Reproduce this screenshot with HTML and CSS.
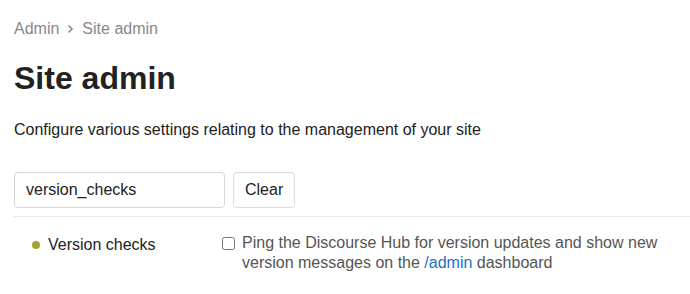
FILE: index.html
```html
<!DOCTYPE html>
<html lang="en">
<head>
    <meta charset="UTF-8">
    <title>Site admin</title>
    <link rel="stylesheet" href="styles.css">
</head>
<body>
<div class="page">
    <div class="crumbs">
        <span>Admin</span>
        <svg class="chev" width="7" height="10" viewBox="0 0 7 10">
            <path d="M1.5 1.5 L5 5 L1.5 8.5" fill="none" stroke="#888" stroke-width="1.6"/>
        </svg>
        <span>Site admin</span>
    </div>
    <h1 class="title">Site admin</h1>
    <p class="desc">Configure various settings relating to the management of your site</p>

    <div class="filter">
        <input class="search" type="text" value="version_checks">
        <button class="btn">Clear</button>
    </div>

    <div class="settings">
        <div class="setting">
            <div class="setting-label">
                <span class="dot"></span>
                <span>Version checks</span>
            </div>
            <label class="setting-value">
                <input type="checkbox" class="check">
                <span>Ping the Discourse Hub for version updates and show new version messages on the <a href="#">/admin</a> dashboard</span>
            </label>
        </div>
    </div>
</div>
</body>
</html>
```

FILE: styles.css
```css
html,body{
    margin:0;
    padding:0;
    background:#fff;
}
body{
    font-family:"Liberation Sans", Arial, sans-serif;
    font-size:16px;
    color:#222;
}
.page{
    padding:17px 0 0 14px;
}
.crumbs{
    display:flex;
    align-items:center;
    line-height:24px;
    color:#888;
}
.chev{
    margin:0 8px 0 8px;
}
.title{
    margin:17px 0 0;
    font-size:32px;
    line-height:40px;
    font-weight:bold;
    color:#222;
}
.desc{
    margin:20px 0 0;
    line-height:24px;
}
.filter{
    display:flex;
    gap:8px;
    margin-top:30px;
    padding-bottom:8px;
    border-bottom:1px solid #e9e9e9;
}
.search{
    box-sizing:border-box;
    width:211px;
    height:36px;
    margin:0;
    padding:0 11px;
    border:1px solid #d6d6d6;
    border-radius:4px;
    font-family:inherit;
    font-size:16px;
    color:#222;
    outline:none;
}
.btn{
    box-sizing:border-box;
    height:36px;
    margin:0;
    padding:0 11px;
    background:#fff;
    border:1px solid #dcdcdc;
    border-radius:4px;
    font-family:inherit;
    font-size:16px;
    color:#222;
}
.setting{
    display:grid;
    grid-template-columns:208px 1fr;
    padding-top:16px;
}
.setting-label{
    display:flex;
    align-items:center;
    gap:8px;
    padding-left:18px;
    line-height:20px;
    height:24px;
    color:#222;
}
.dot{
    width:8px;
    height:8px;
    border-radius:50%;
    background:#a5a433;
}
.setting-value{
    display:flex;
    align-items:flex-start;
    gap:7px;
    line-height:20px;
    color:#555;
}
.check{
    width:13px;
    height:13px;
    margin:3.5px 0 0;
    flex:none;
}
.setting-value a{
    color:#1a72c4;
    text-decoration:none;
}
```
